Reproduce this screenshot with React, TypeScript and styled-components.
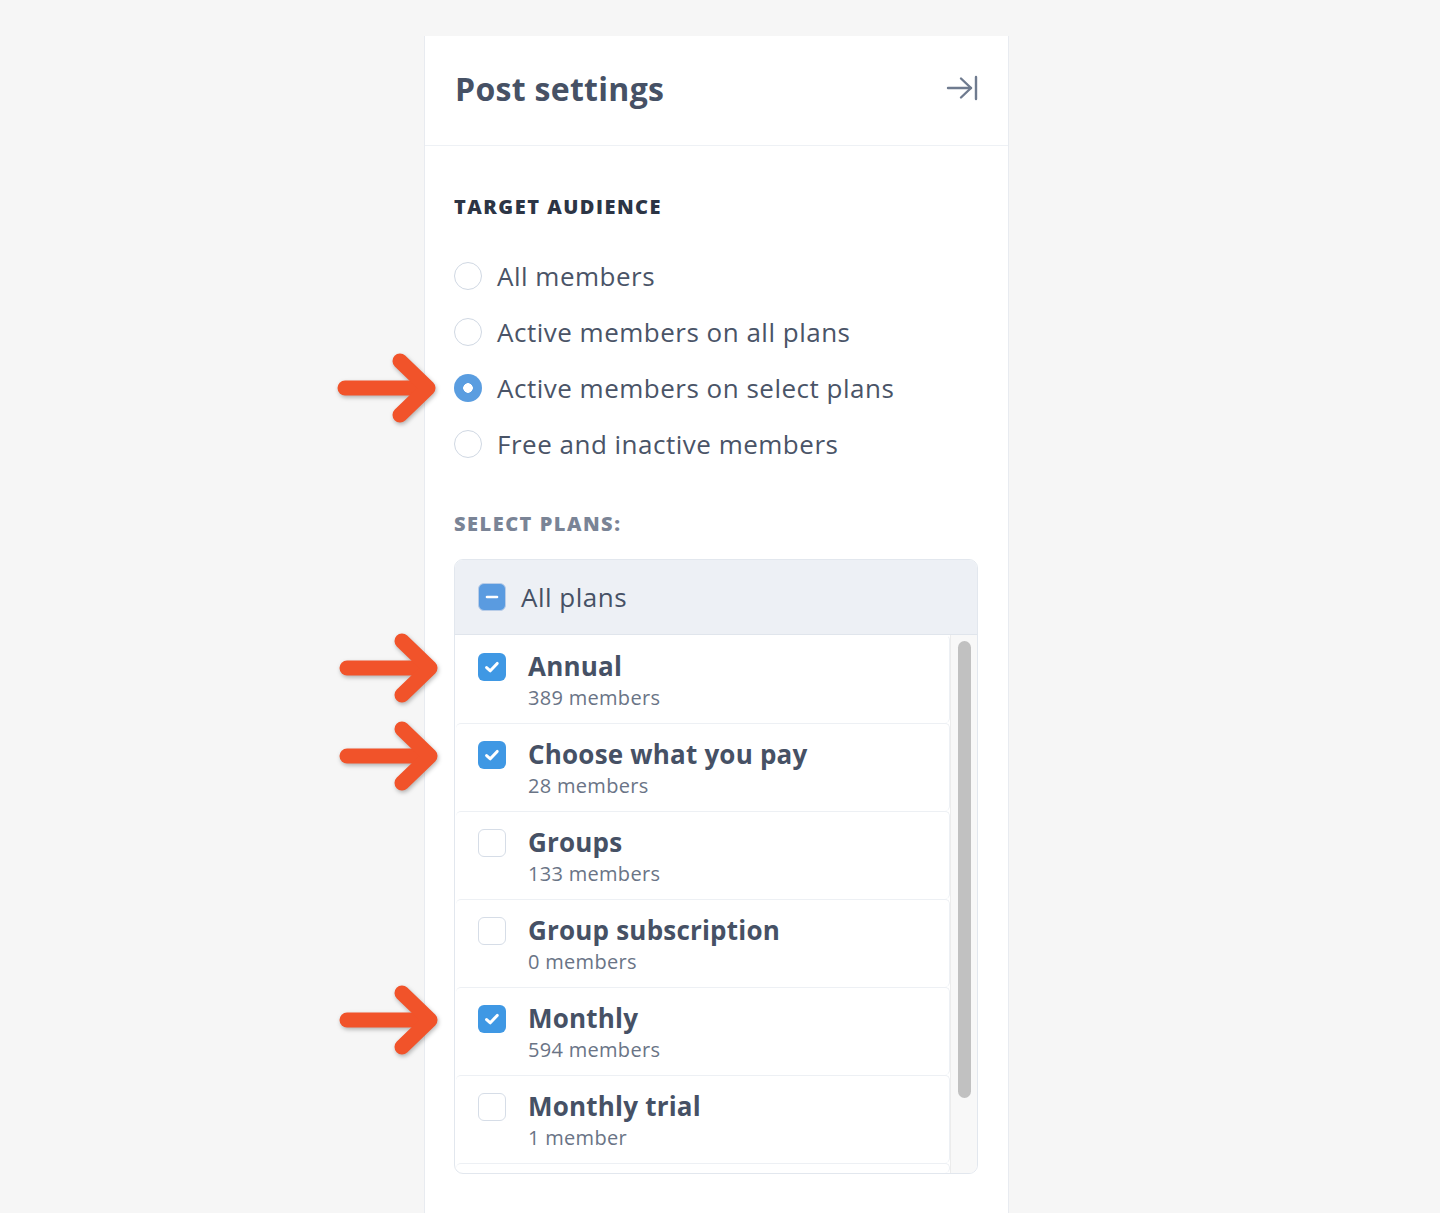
import React from "react";
import styled, { createGlobalStyle } from "styled-components";

const GlobalStyle = createGlobalStyle`
  html, body {
    margin: 0;
    padding: 0;
    background: #f6f6f6;
    font-family: "Open Sans", Lato, "Liberation Sans", sans-serif;
    -webkit-font-smoothing: antialiased;
  }
`;

// panneau principal
const Panel = styled.aside`
  box-sizing: border-box;
  width: 585px;
  min-height: 1177px;
  margin: 36px 0 0 424px;
  background: #fff;
  border-left: 1px solid #e8ebf0;
  border-right: 1px solid #e8ebf0;
`;

const Header = styled.header`
  display: flex;
  align-items: center;
  justify-content: space-between;
  box-sizing: border-box;
  height: 110px;
  padding: 0 30px 5px;
  border-bottom: 1px solid #eef1f5;
  h1 {
    margin: 0;
    font-size: 32px;
    font-weight: 700;
    color: #465165;
    letter-spacing: 0.3px;
  }
`;

const CloseButton = styled.button`
  display: flex;
  border: 0;
  background: none;
  padding: 0;
  cursor: pointer;
`;

const Body = styled.div`
  padding: 49px 30px 40px 29px;
`;

const SectionLabel = styled.h4<{ $muted?: boolean }>`
  margin: 0;
  font-size: 20px;
  line-height: 24px;
  font-weight: 800;
  letter-spacing: 1.5px;
  text-transform: uppercase;
  color: ${(p) => (p.$muted ? "#7a8496" : "#2c3545")};
`;

const RadioList = styled.div`
  display: flex;
  flex-direction: column;
  margin: 29px 0 40px;
`;

const RadioRow = styled.label`
  position: relative;
  display: flex;
  align-items: center;
  gap: 15px;
  height: 56px;
  font-size: 26px;
  letter-spacing: 0.5px;
  color: #4a5467;
  cursor: pointer;
`;

const RadioDot = styled.span<{ $checked?: boolean }>`
  box-sizing: border-box;
  width: 28px;
  height: 28px;
  border-radius: 50%;
  flex-shrink: 0;
  border: ${(p) => (p.$checked ? "none" : "1.5px solid #d0d8e3")};
  background: ${(p) =>
    p.$checked
      ? "radial-gradient(circle, #fff 0 4.5px, #5a9de0 5px)"
      : "#fff"};
`;

const PlansBox = styled.div`
  margin-top: 23px;
  border: 1px solid #e2e7ee;
  border-radius: 9px;
`;

const BoxHeader = styled.label`
  display: flex;
  align-items: center;
  gap: 15px;
  height: 74px;
  padding-left: 23px;
  background: #edf0f5;
  border-bottom: 1px solid #e0e5ec;
  border-radius: 8px 8px 0 0;
  font-size: 26px;
  letter-spacing: 0.5px;
  color: #465165;
`;

const BoxBody = styled.div`
  display: flex;
`;

const PlanList = styled.div`
  flex: 1;
  display: flex;
  flex-direction: column;
  padding-left: 1px;
`;

const PlanRow = styled.label<{ $peek?: boolean }>`
  position: relative;
  display: flex;
  align-items: flex-start;
  gap: 22px;
  box-sizing: border-box;
  height: ${(p) => (p.$peek ? "10px" : "88px")};
  padding: ${(p) => (p.$peek ? "0" : "14px 0 0 22px")};
  border-top: 1px solid #edf0f4;
  border-right: 1px solid #edf0f4;
  border-radius: 5px;
  &:first-child {
    border-top-color: transparent;
  }
`;

const PlanText = styled.div`
  display: flex;
  flex-direction: column;
  strong {
    font-size: 26px;
    line-height: 32px;
    font-weight: 700;
    color: #465165;
    letter-spacing: 0.2px;
  }
  span {
    font-size: 20px;
    line-height: 31px;
    letter-spacing: 0.3px;
    color: #6a7486;
  }
`;

const Check = styled.span<{ $state: "on" | "off" | "mixed" }>`
  box-sizing: border-box;
  display: flex;
  align-items: center;
  justify-content: center;
  flex-shrink: 0;
  width: 28px;
  height: 28px;
  margin-top: 3px;
  border-radius: 6px;
  border: ${(p) =>
    p.$state === "off"
      ? "1.5px solid #d6dde7"
      : p.$state === "mixed"
      ? "1.5px solid #b9cde8"
      : "none"};
  background: ${(p) =>
    p.$state === "off" ? "#fff" : p.$state === "mixed" ? "#5a9be0" : "#3f98e4"};
`;

const HeaderCheck = styled(Check)`
  margin-top: 0;
`;

const Track = styled.div`
  width: 27px;
  flex-shrink: 0;
  background: #f8f8f8;
  border-left: 1px solid #ececec;
  border-bottom-right-radius: 8px;
  padding: 6px 0 0 7px;
  box-sizing: border-box;
`;

const Thumb = styled.div`
  width: 13px;
  height: 457px;
  border-radius: 7px;
  background: #c1c1c1;
`;

const Pointer = styled.svg`
  position: absolute;
  left: -117px;
  top: 50%;
  transform: translateY(-50%);
  overflow: visible;
  filter: drop-shadow(1px 2px 2px rgba(0, 0, 0, 0.28));
`;

const Arrow = ({ offset = 0 }: { offset?: number }) => (
  <Pointer width="100" height="72" viewBox="0 0 100 72" style={{ marginTop: offset }}>
    <g fill="none" stroke="#f1532a" strokeWidth="15" strokeLinecap="round" strokeLinejoin="round">
      <path d="M8 36 H88" />
      <path d="M63 9 L91 36 L63 63" />
    </g>
  </Pointer>
);

const CheckMark = () => (
  <svg width="20" height="20" viewBox="0 0 20 20">
    <path d="M4.6 10.6 L8.3 13.8 L15.2 6.4" fill="none" stroke="#fff" strokeWidth="3" strokeLinecap="round" strokeLinejoin="round" />
  </svg>
);

const plans = [
  { name: "Annual", members: "389 members", checked: true },
  { name: "Choose what you pay", members: "28 members", checked: true },
  { name: "Groups", members: "133 members", checked: false },
  { name: "Group subscription", members: "0 members", checked: false },
  { name: "Monthly", members: "594 members", checked: true },
  { name: "Monthly trial", members: "1 member", checked: false },
];

const audiences = [
  "All members",
  "Active members on all plans",
  "Active members on select plans",
  "Free and inactive members",
];

const App = () => {
  return (
    <>
      <GlobalStyle />
      <Panel>
        <Header>
          <h1>Post settings</h1>
          <CloseButton aria-label="Close">
            <svg width="32" height="26" viewBox="0 0 32 26">
              <g fill="none" stroke="#6f7b8f" strokeWidth="2.4" strokeLinecap="round" strokeLinejoin="round">
                <path d="M2 13 H25" />
                <path d="M15 3.5 L25 13 L15 22.5" />
                <path d="M30 2 V24" />
              </g>
            </svg>
          </CloseButton>
        </Header>
        <Body>
          <SectionLabel>Target audience</SectionLabel>
          <RadioList>
            {audiences.map((a, i) => (
              <RadioRow key={a}>
                {i === 2 && <Arrow />}
                <RadioDot $checked={i === 2} />
                {a}
              </RadioRow>
            ))}
          </RadioList>
          <SectionLabel $muted>Select plans:</SectionLabel>
          <PlansBox>
            <BoxHeader>
              <HeaderCheck $state="mixed">
                <svg width="16" height="16" viewBox="0 0 16 16">
                  <path d="M3 8 H13" stroke="#fff" strokeWidth="2.6" strokeLinecap="round" />
                </svg>
              </HeaderCheck>
              All plans
            </BoxHeader>
            <BoxBody>
              <PlanList>
                {plans.map((p) => (
                  <PlanRow key={p.name}>
                    {p.checked && <Arrow offset={-12} />}
                    <Check $state={p.checked ? "on" : "off"}>{p.checked && <CheckMark />}</Check>
                    <PlanText>
                      <strong>{p.name}</strong>
                      <span>{p.members}</span>
                    </PlanText>
                  </PlanRow>
                ))}
                <PlanRow $peek />
              </PlanList>
              <Track>
                <Thumb />
              </Track>
            </BoxBody>
          </PlansBox>
        </Body>
      </Panel>
    </>
  );
};

export default App;
